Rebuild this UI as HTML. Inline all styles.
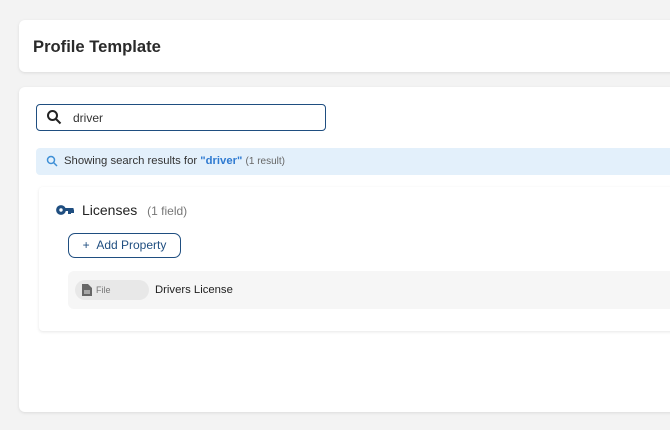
<!DOCTYPE html>
<html><head><style>
body{margin:0;width:670px;height:430px;background:#f3f3f3;font-family:"Liberation Sans",sans-serif;overflow:hidden;position:relative}
.card{position:absolute;background:#fff;border-radius:6px;box-shadow:0 1px 3px rgba(0,0,0,.1)}
</style></head><body>
<div class="card" style="left:19px;top:20px;width:660px;height:52px">
 <div style="position:absolute;left:14px;top:17px;font-size:16.6px;font-weight:bold;color:#2a2a2a">Profile Template</div>
</div>
<div class="card" style="left:19px;top:87px;width:660px;height:325px">
 <div style="position:absolute;left:17px;top:17px;width:288px;height:25px;border:1.5px solid #1f4e80;border-radius:4px">
  <svg style="position:absolute;left:9px;top:4px" width="16" height="16" viewBox="0 0 16 16"><circle cx="6.5" cy="6.5" r="4.5" fill="none" stroke="#222" stroke-width="2"/><path d="M10 10l4.5 4.5" stroke="#222" stroke-width="2"/></svg>
  <div style="position:absolute;left:36px;top:6px;font-size:12px;color:#333">driver</div>
 </div>
 <div style="position:absolute;left:17px;top:61px;width:660px;height:27px;background:#e3f0fb;border-radius:4px">
  <svg style="position:absolute;left:10px;top:7px" width="12" height="12" viewBox="0 0 12 12"><circle cx="5" cy="5" r="3.5" fill="none" stroke="#3d8fd6" stroke-width="1.5"/><path d="M7.5 7.5l3.5 3.5" stroke="#3d8fd6" stroke-width="1.5"/></svg>
  <div style="position:absolute;left:28px;top:7px;font-size:11.3px;color:#333">Showing search results for <b style="color:#2e7ad1">"driver"</b> <span style="color:#666;font-size:10px">(1 result)</span></div>
 </div>
 <div class="card" style="left:20px;top:100px;width:650px;height:144px;border-radius:4px">
  <svg style="position:absolute;left:17px;top:17px" width="18" height="12" viewBox="0 0 18 12"><circle cx="5" cy="6" r="3.3" fill="none" stroke="#1f4e80" stroke-width="3.2"/><path d="M9 5.5h8.5M13.5 5.5v4.5M16.5 5.5v3.5" stroke="#1f4e80" stroke-width="3"/></svg>
  <div style="position:absolute;left:43px;top:15px;font-size:14px;color:#222">Licenses <span style="font-size:12px;color:#777;margin-left:6px">(1 field)</span></div>
  <div style="position:absolute;left:29px;top:46px;width:111px;height:23px;border:1.5px solid #1f4e80;border-radius:7px;font-size:12px;color:#1f4e80;line-height:23px;text-align:center">+&nbsp;&nbsp;Add Property</div>
  <div style="position:absolute;left:29px;top:84px;width:640px;height:38px;background:#f6f6f6;border-radius:6px">
   <div style="position:absolute;left:7px;top:9px;width:74px;height:20px;background:#e8e8e8;border-radius:10px">
    <svg style="position:absolute;left:7px;top:4px" width="10" height="12" viewBox="0 0 10 12"><path d="M0 0h6l4 4v8H0z" fill="#666"/><path d="M2 7h6M2 9h6" stroke="#e8e8e8"/></svg>
    <div style="position:absolute;left:21px;top:5px;font-size:9px;color:#777">File</div>
   </div>
   <div style="position:absolute;left:87px;top:13px;font-size:11.3px;color:#222">Drivers License</div>
  </div>
 </div>
</div>
</body></html>
